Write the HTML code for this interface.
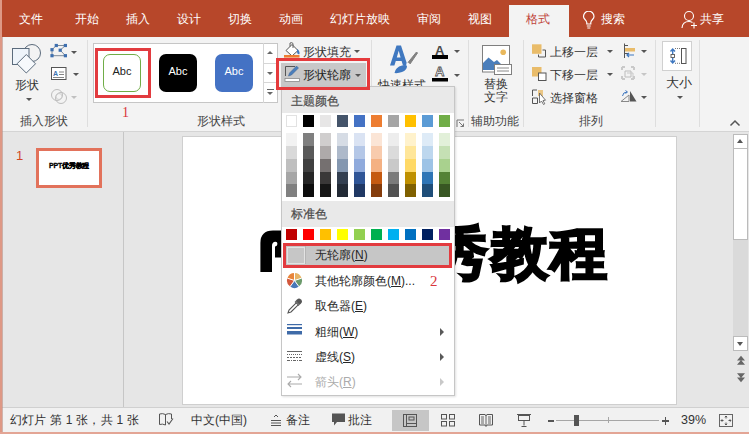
<!DOCTYPE html>
<html><head><meta charset="utf-8">
<style>
*{margin:0;padding:0;box-sizing:border-box}
html,body{width:749px;height:434px;overflow:hidden}
body{position:relative;background:#E6E6E6;font-family:"Liberation Sans",sans-serif;font-size:12px;color:#262626}
.a{position:absolute}
.t{position:absolute;white-space:nowrap;line-height:1}
#title{left:0;top:0;width:749px;height:37px;background:#B7472A}
.tab{position:absolute;top:13px;color:#fff;font-size:12px;line-height:13px;white-space:nowrap}
#ribbon{left:0;top:37px;width:749px;height:95px;background:#F3F3F3;border-bottom:1px solid #D4D4D4}
.sep{position:absolute;width:1px;background:#DEDEDE;top:40px;height:87px}
.grp{position:absolute;top:115px;font-size:12px;line-height:12px;color:#444;white-space:nowrap}
.dd{position:absolute;width:0;height:0;border-left:3px solid transparent;border-right:3px solid transparent;border-top:3px solid #555}
</style></head><body>
<div id="title" class="a"></div>
<div class="tab" style="left:19px">文件</div>
<div class="tab" style="left:75px">开始</div>
<div class="tab" style="left:126px">插入</div>
<div class="tab" style="left:177px">设计</div>
<div class="tab" style="left:228px">切换</div>
<div class="tab" style="left:279px">动画</div>
<div class="tab" style="left:330px">幻灯片放映</div>
<div class="tab" style="left:417px">审阅</div>
<div class="tab" style="left:468px">视图</div>
<div class="a" style="left:509px;top:5px;width:60px;height:33px;background:#F3F3F3"></div>
<div class="tab" style="left:526px;color:#C0443A">格式</div>
<div class="tab" style="left:601px">搜索</div>
<div class="tab" style="left:700px">共享</div>

<div id="ribbon" class="a"></div>
<div class="sep" style="left:87px"></div>
<div class="sep" style="left:371px"></div>
<div class="sep" style="left:468px"></div>
<div class="sep" style="left:523px"></div>
<div class="sep" style="left:655px"></div>
<div class="sep" style="left:699px"></div>
<div class="grp" style="left:20px">插入形状</div>
<div class="grp" style="left:197px">形状样式</div>
<div class="grp" style="left:471px">辅助功能</div>
<div class="grp" style="left:579px">排列</div>


<!-- group1 insert shapes -->
<svg class="a" style="left:10px;top:42px" width="34" height="34" viewBox="10 42 34 34">
<circle cx="32" cy="53" r="8.5" fill="#F3F3F3" stroke="#5B6B7C" stroke-width="1"/>
<rect x="12.5" y="48.5" width="16.5" height="16" fill="#EEF4FA" stroke="#5B6B7C" stroke-width="1"/>
<path d="M26.3 54.5 L35.5 63.8 L26.3 73 L17 63.8 Z" fill="#F6F9FC" stroke="#5B6B7C" stroke-width="1"/>
</svg>
<div class="t" style="left:15px;top:79px;font-size:12px;color:#333">形状</div>
<div class="dd" style="left:26px;top:98px"></div>
<svg class="a" style="left:48px;top:42px" width="22" height="17" viewBox="48 42 22 17">
<path d="M56.3 45.5 H65.4 L60.2 50.2 L65.4 55.7 H52 V49.7 Z" fill="none" stroke="#6F7F8F" stroke-width="0.9"/>
<rect x="54.7" y="43.9" width="3.2" height="3.2" fill="#3E6FAE"/>
<rect x="63.8" y="43.9" width="3.2" height="3.2" fill="#3E6FAE"/>
<rect x="50.4" y="48.1" width="3.2" height="3.2" fill="#3E6FAE"/>
<rect x="58.6" y="48.6" width="3.2" height="3.2" fill="#3E6FAE"/>
<rect x="50.4" y="54.1" width="3.2" height="3.2" fill="#3E6FAE"/>
<rect x="63.8" y="54.1" width="3.2" height="3.2" fill="#3E6FAE"/>
</svg>
<div class="dd" style="left:71px;top:51px"></div>
<svg class="a" style="left:50px;top:66px" width="18" height="15" viewBox="50 66 18 15">
<rect x="51.5" y="67.5" width="14.5" height="12" fill="#fff" stroke="#555" stroke-width="1"/>
<text x="53" y="76" font-size="7" font-family="Liberation Sans" fill="#3E72B0" font-weight="bold">A</text>
<path d="M59 72h5M59 74.5h5M53 77.5h11" stroke="#666" stroke-width="0.8"/>
</svg>
<div class="dd" style="left:73px;top:73px"></div>
<svg class="a" style="left:50px;top:88px" width="18" height="17" viewBox="50 88 18 17">
<circle cx="57" cy="95" r="5.5" fill="none" stroke="#BDBDBD" stroke-width="1"/>
<circle cx="61" cy="98" r="5.5" fill="none" stroke="#BDBDBD" stroke-width="1"/>
<circle cx="59" cy="96.5" r="3" fill="none" stroke="#C8C8C8" stroke-width="0.8"/>
</svg>
<div class="dd" style="left:71px;top:96px;border-top-color:#C0C0C0"></div>


<!-- group2 gallery -->
<div class="a" style="left:93px;top:43px;width:185px;height:60px;background:#fff;border:1px solid #C6C6C6"></div>
<div class="a" style="left:263px;top:43px;width:1px;height:60px;background:#D6D6D6"></div>
<div class="a" style="left:263px;top:63px;width:15px;height:1px;background:#D6D6D6"></div>
<div class="a" style="left:263px;top:82px;width:15px;height:1px;background:#D6D6D6"></div>
<div class="a" style="left:267px;top:51px;width:0;height:0;border-left:3.5px solid transparent;border-right:3.5px solid transparent;border-bottom:3.5px solid #666"></div>
<div class="dd" style="left:267px;top:72px;border-left-width:3.5px;border-right-width:3.5px;border-top:3.5px solid #666"></div>
<div class="a" style="left:267px;top:89px;width:7px;height:1px;background:#666"></div>
<div class="dd" style="left:267px;top:92px;border-left-width:3.5px;border-right-width:3.5px;border-top:3.5px solid #666"></div>
<div class="a" style="left:103px;top:54px;width:38px;height:38px;border:1px solid #70AD47;border-radius:7px;background:#fff"></div>
<div class="t" style="left:112.5px;top:66px;font-size:11px;color:#222">Abc</div>
<div class="a" style="left:159px;top:54px;width:38px;height:38px;border-radius:7px;background:#000"></div>
<div class="t" style="left:168.5px;top:66px;font-size:11px;color:#fff">Abc</div>
<div class="a" style="left:215px;top:54px;width:38px;height:38px;border-radius:7px;background:#4472C4"></div>
<div class="t" style="left:224.5px;top:66px;font-size:11px;color:#fff">Abc</div>
<div class="a" style="left:95px;top:48px;width:56px;height:50px;border:3px solid #E23B3F"></div>
<div class="t" style="left:122px;top:106px;font-size:14px;color:#D9363B;font-family:'Liberation Serif',serif">1</div>

<!-- fill/outline -->
<svg class="a" style="left:284px;top:42px" width="17" height="16" viewBox="284 42 17 16">
<path d="M286 50.5 L292 44.5 L298 50.5 L292 56 Z" fill="#fff" stroke="#555" stroke-width="1"/>
<path d="M290 46.5 L290 43 Q292 42 293 43.5 L293 48" fill="none" stroke="#555" stroke-width="0.9"/>
<path d="M297 49 Q300 51 299.5 54 Q297.5 55 297 52 Z" fill="#3F78C0"/>
<rect x="284" y="55" width="15.5" height="2.6" fill="#ED7D31"/>
</svg>
<div class="t" style="left:303px;top:46px;font-size:12px;color:#333">形状填充</div>
<div class="dd" style="left:354px;top:50px"></div>
<div class="a" style="left:276px;top:57.5px;width:94px;height:32px;border:3px solid #E53A3C;z-index:5"></div>
<div class="a" style="left:280.5px;top:62.5px;width:85px;height:23px;background:#C8C8C8"></div>
<svg class="a" style="left:284px;top:64px" width="17" height="18" viewBox="284 64 17 18">
<path d="M285.5 76 L285.5 66.5 L295 66.5" fill="none" stroke="#555" stroke-width="1"/>
<path d="M288.5 76 L289.5 73 L296.5 66 L298.5 68 L291.5 75 Z" fill="#4A7EBB" stroke="#3A5F8F" stroke-width="0.5"/>
<rect x="285" y="78.5" width="14.5" height="3" fill="#fff" stroke="#8A8A8A" stroke-width="0.8"/>
</svg>
<div class="t" style="left:303px;top:69px;font-size:12px;color:#222">形状轮廓</div>
<div class="dd" style="left:355px;top:74px"></div>

<!-- wordart -->
<svg class="a" style="left:385px;top:43px" width="34" height="33" viewBox="385 43 34 33">
<path d="M390 65.5 L396.5 45.5 L401 45.5 L407.5 65.5 L403 65.5 L401.6 61 L395.8 61 L394.4 65.5 Z M396.8 57.5 L400.6 57.5 L398.7 50.8 Z" fill="#3F78C0" fill-rule="evenodd"/>
<path d="M408 62.5 L416.5 52 L417.5 53 L410 64" fill="#808080" stroke="#808080" stroke-width="1"/>
<path d="M406.5 63 L408.5 65 L406 67" fill="#fff"/>
<path d="M394.5 73 Q395.5 67 402 65.5 Q406 64.5 407 66 Q407 70 402 72 Q398 73.5 394.5 73 Z" fill="#3F78C0"/>
</svg>
<div class="t" style="left:378px;top:79px;font-size:12px;color:#333">快速样式</div>
<div class="t" style="left:435px;top:44px;font-size:13px;color:#4A4A4A;font-weight:bold">A</div>
<div class="a" style="left:432px;top:55px;width:16px;height:3.5px;background:#000"></div>
<div class="dd" style="left:454px;top:50px"></div>
<svg class="a" style="left:432px;top:64px" width="17" height="19" viewBox="432 64 17 19">
<text x="435" y="76" font-size="13" font-family="Liberation Sans" font-weight="bold" fill="#fff" stroke="#555" stroke-width="0.8">A</text>
<rect x="432" y="78" width="16" height="3.5" fill="#000"/>
</svg>
<div class="dd" style="left:454px;top:74px"></div>
<svg class="a" style="left:456px;top:119px" width="9" height="9" viewBox="0 0 9 9">
<path d="M1 8 L1 1 L8 1" fill="none" stroke="#777" stroke-width="1"/>
<path d="M3 3 L7.5 7.5 M4.5 7.5 L7.5 7.5 L7.5 4.5" fill="none" stroke="#777" stroke-width="1"/>
</svg>


<!-- alt text -->
<svg class="a" style="left:480px;top:43px" width="34" height="34" viewBox="480 43 34 34">
<rect x="482.5" y="45.5" width="27" height="26.5" fill="#fff" stroke="#7F7F7F" stroke-width="1"/>
<circle cx="503.2" cy="52.2" r="2.8" fill="#E9B85C"/>
<path d="M483 70 L483 63 L488.5 57.5 L494 62 L497 60 L502 65 L502 70 Z" fill="#4A7EBB"/>
<rect x="494.5" y="64.5" width="17" height="10" fill="#fff" stroke="#7F7F7F" stroke-width="1"/>
<path d="M497 68h12M497 71h12" stroke="#8A8A8A" stroke-width="1"/>
</svg>
<div class="t" style="left:484px;top:78px;font-size:12px;color:#333">替换</div>
<div class="t" style="left:484px;top:91px;font-size:12px;color:#333">文字</div>

<!-- arrange -->
<svg class="a" style="left:530px;top:42px" width="18" height="64" viewBox="530 42 18 64">
<rect x="532" y="44.3" width="9.5" height="9.5" fill="#E9BC6A"/>
<path d="M542.5 50 L545.5 50 L545.5 57 L538.5 57 L538.5 54.5" fill="none" stroke="#555" stroke-width="1"/>
<rect x="532" y="67" width="9.5" height="9.5" fill="#E9BC6A"/>
<rect x="538.5" y="73" width="7.5" height="7.5" fill="#fff" stroke="#555" stroke-width="1"/>
<path d="M532.5 96 L532.5 90 L537 90 M532.5 98 L537.5 98 L537.5 103.5 L532.5 103.5 Z" fill="none" stroke="#555" stroke-width="1"/>
<rect x="538" y="90" width="5" height="6" fill="#E9BC6A" opacity="0.8"/>
<path d="M539.5 93 L539.5 103 L541.5 101 L543.5 104.5 L544.8 103.8 L543 100.5 L545.5 100.2 Z" fill="#fff" stroke="#555" stroke-width="0.8"/>
</svg>
<div class="t" style="left:550px;top:46px;font-size:12px;color:#333">上移一层</div>
<div class="t" style="left:550px;top:69px;font-size:12px;color:#333">下移一层</div>
<div class="t" style="left:550px;top:92px;font-size:12px;color:#333">选择窗格</div>
<div class="dd" style="left:607px;top:50px"></div>
<div class="dd" style="left:607px;top:73px"></div>
<svg class="a" style="left:619px;top:42px" width="20" height="62" viewBox="619 42 20 62">
<path d="M624.5 43.5 V58" stroke="#555" stroke-width="1"/>
<rect x="625" y="48" width="10" height="3.5" fill="#E9BC6A"/>
<path d="M625 45.5 h3 M625 53.5h3" stroke="#555" stroke-width="1"/>
<path d="M634 55 H627 M629 53 L627 55 L629 57" fill="none" stroke="#3F78C0" stroke-width="1.2"/>
<path d="M622 67 h3 M631 67 h3 M622 79 h3 M631 79 h3 M622 67 v3 M622 76 v3 M634 67 v3 M634 76 v3" stroke="#C9C9C9" stroke-width="2"/>
<path d="M625 71 h6 v6 h-6 z" fill="none" stroke="#BDBDBD" stroke-width="1"/>
<path d="M627 73 h6 v5" fill="none" stroke="#C9C9C9" stroke-width="1"/>
<path d="M621 101.5 L629 95 L629 101.5 Z" fill="none" stroke="#888" stroke-width="1"/>
<path d="M630 91 L636.5 101.5 L630 101.5 Z" fill="#555"/>
<path d="M622.5 96 Q623 92 627 92 M625.5 90.5 L627.5 92 L625.5 93.5" fill="none" stroke="#3F78C0" stroke-width="1"/>
</svg>
<div class="dd" style="left:641px;top:50px"></div>
<div class="dd" style="left:641px;top:73px;border-top-color:#C6C6C6"></div>
<div class="dd" style="left:641px;top:96px"></div>

<!-- size -->
<div class="a" style="left:662px;top:41px;width:30px;height:30px;background:#fff;border:1px solid #D0D0D0"></div>
<svg class="a" style="left:663px;top:42px" width="28" height="28" viewBox="663 42 28 28">
<path d="M672.7 49 V54 M670.5 51.5 L672.7 49 L675 51.5 M672.7 58 V63 M670.5 60.5 L672.7 63 L675 60.5" fill="none" stroke="#3F78C0" stroke-width="1.4"/>
<rect x="671" y="54.5" width="3.5" height="3" fill="none" stroke="#555" stroke-width="0.9"/>
<path d="M675 48.5 h6 M675 63.3 h6" stroke="#555" stroke-width="0.8" stroke-dasharray="1 1"/>
<rect x="681.5" y="48.5" width="4.5" height="15" fill="#fff" stroke="#555" stroke-width="1"/>
</svg>
<div class="t" style="left:666px;top:77px;font-size:12.5px;color:#333">大小</div>
<div class="dd" style="left:677px;top:96px"></div>
<svg class="a" style="left:729px;top:119px" width="12" height="8" viewBox="0 0 12 8">
<path d="M1.5 6.5 L6 2 L10.5 6.5" fill="none" stroke="#555" stroke-width="1.5"/>
</svg>

<!-- tab icons -->
<svg class="a" style="left:581px;top:11px" width="16" height="19" viewBox="581 11 16 19">
<path d="M586.8 24 L586.8 22.5 Q586.5 21 585 19.5 Q583.5 18 583.5 16.5 A5.2 5.2 0 0 1 594 16.5 Q594 18 592.5 19.5 Q591 21 590.8 22.5 L590.8 24 Z" fill="none" stroke="#fff" stroke-width="1.2"/>
<path d="M586.8 26 h4 M587.3 28 h3" stroke="#fff" stroke-width="1.2"/>
</svg>
<svg class="a" style="left:680px;top:10px" width="19" height="20" viewBox="680 10 19 20">
<circle cx="689" cy="16" r="4.5" fill="none" stroke="#fff" stroke-width="1.1"/>
<path d="M682 28 Q682.5 21.5 689 21.5 Q691 21.5 692.5 22.5" fill="none" stroke="#fff" stroke-width="1.1"/>
<path d="M694 22.5 v6 M691 25.5 h6" stroke="#fff" stroke-width="1.1"/>
</svg>

<!-- workspace -->
<div class="a" style="left:123px;top:132px;width:1px;height:275px;background:#C6C6C6"></div>
<div class="a" style="left:182px;top:136px;width:495px;height:269px;background:#fff;border:1px solid #CFCFCF"></div>

<!-- thumb -->
<div class="t" style="left:16px;top:149px;font-size:13px;color:#D24726">1</div>
<div class="a" style="left:36px;top:148px;width:66px;height:40px;background:#fff;border:3px solid #E2725B"></div>
<div class="t" style="left:49px;top:162px;font-size:7px;font-weight:bold;color:#000;letter-spacing:-0.2px;-webkit-text-stroke:0.3px #000">PPT优秀教程</div>
<!-- big slide text -->
<svg class="a" style="left:258px;top:228px" width="30" height="46" viewBox="258 228 30 46"><path d="M260.4 272 V243 Q260.4 230.4 273 230.4 H287 V257.4 H275 V246.5 C277.5 246.5 278.5 241.8 275.5 241.8 C273 241.8 272 243.5 272 246 V272 Z" fill="#000"/></svg>
<div class="t" id="bigC" style="left:431px;top:225px;font-size:57px;font-weight:bold;color:#000;-webkit-text-stroke:2.5px #000;letter-spacing:2.5px">秀教程</div>
<!-- scrollbar -->
<div class="a" style="left:733px;top:148px;width:15px;height:188px;background:#DADADA"></div>
<div class="a" style="left:733px;top:134px;width:15px;height:15px;background:#fff;border:1px solid #BBBBBB"></div>
<div class="a" style="left:737px;top:139px;width:0;height:0;border-left:3.5px solid transparent;border-right:3.5px solid transparent;border-bottom:4px solid #555"></div>
<div class="a" style="left:733px;top:148px;width:15px;height:92px;background:#fff;border:1px solid #BBBBBB"></div>
<div class="a" style="left:733px;top:336px;width:15px;height:15px;background:#fff;border:1px solid #BBBBBB"></div>
<div class="a" style="left:737px;top:342px;width:0;height:0;border-left:3.5px solid transparent;border-right:3.5px solid transparent;border-top:4px solid #555"></div>
<svg class="a" style="left:735px;top:353px" width="12" height="32" viewBox="735 353 12 32">
<path d="M737 360.5 L741 355.8 L745 360.5 Z M737 364.8 L741 360.1 L745 364.8 Z" fill="#666"/>
<path d="M737 373.3 L741 378 L745 373.3 Z M737 377.6 L741 382.3 L745 377.6 Z" fill="#666"/>
</svg>

<!-- menu -->
<div class="a" style="left:281px;top:86px;width:174px;height:310px;background:#fff;border:1px solid #C6C6C6;box-shadow:1px 1px 2px rgba(0,0,0,0.12)"></div>
<div class="a" style="left:282px;top:87px;width:172px;height:26px;background:#E9E9E9"></div>
<div class="t" style="left:291px;top:95px;font-size:12px;color:#4A4A4A;-webkit-text-stroke:0.2px #4A4A4A">主题颜色</div>
<div class="a" style="left:285.7px;top:115.4px;width:11.7px;height:12px;background:#FFFFFF;border:1px solid #E2E2E2;"></div>
<div class="a" style="left:302.7px;top:115.4px;width:11.7px;height:12px;background:#000000;"></div>
<div class="a" style="left:319.7px;top:115.4px;width:11.7px;height:12px;background:#E7E6E6;"></div>
<div class="a" style="left:336.7px;top:115.4px;width:11.7px;height:12px;background:#44546A;"></div>
<div class="a" style="left:353.7px;top:115.4px;width:11.7px;height:12px;background:#4472C4;"></div>
<div class="a" style="left:370.7px;top:115.4px;width:11.7px;height:12px;background:#ED7D31;"></div>
<div class="a" style="left:387.7px;top:115.4px;width:11.7px;height:12px;background:#A5A5A5;"></div>
<div class="a" style="left:404.7px;top:115.4px;width:11.7px;height:12px;background:#FFC000;"></div>
<div class="a" style="left:421.7px;top:115.4px;width:11.7px;height:12px;background:#5B9BD5;"></div>
<div class="a" style="left:438.7px;top:115.4px;width:11.7px;height:12px;background:#70AD47;"></div>
<div class="a" style="left:285.7px;top:133.4px;width:11.7px;height:12.8px;background:#F2F2F2"></div>
<div class="a" style="left:285.7px;top:146.1px;width:11.7px;height:12.8px;background:#D9D9D9"></div>
<div class="a" style="left:285.7px;top:158.8px;width:11.7px;height:12.8px;background:#BFBFBF"></div>
<div class="a" style="left:285.7px;top:171.5px;width:11.7px;height:12.8px;background:#A6A6A6"></div>
<div class="a" style="left:285.7px;top:184.2px;width:11.7px;height:12.8px;background:#808080"></div>
<div class="a" style="left:302.7px;top:133.4px;width:11.7px;height:12.8px;background:#7F7F7F"></div>
<div class="a" style="left:302.7px;top:146.1px;width:11.7px;height:12.8px;background:#595959"></div>
<div class="a" style="left:302.7px;top:158.8px;width:11.7px;height:12.8px;background:#404040"></div>
<div class="a" style="left:302.7px;top:171.5px;width:11.7px;height:12.8px;background:#262626"></div>
<div class="a" style="left:302.7px;top:184.2px;width:11.7px;height:12.8px;background:#0D0D0D"></div>
<div class="a" style="left:319.7px;top:133.4px;width:11.7px;height:12.8px;background:#D0CECE"></div>
<div class="a" style="left:319.7px;top:146.1px;width:11.7px;height:12.8px;background:#AEAAAA"></div>
<div class="a" style="left:319.7px;top:158.8px;width:11.7px;height:12.8px;background:#757070"></div>
<div class="a" style="left:319.7px;top:171.5px;width:11.7px;height:12.8px;background:#3A3838"></div>
<div class="a" style="left:319.7px;top:184.2px;width:11.7px;height:12.8px;background:#161616"></div>
<div class="a" style="left:336.7px;top:133.4px;width:11.7px;height:12.8px;background:#D6DCE5"></div>
<div class="a" style="left:336.7px;top:146.1px;width:11.7px;height:12.8px;background:#ADB9CA"></div>
<div class="a" style="left:336.7px;top:158.8px;width:11.7px;height:12.8px;background:#8497B0"></div>
<div class="a" style="left:336.7px;top:171.5px;width:11.7px;height:12.8px;background:#333F50"></div>
<div class="a" style="left:336.7px;top:184.2px;width:11.7px;height:12.8px;background:#222A35"></div>
<div class="a" style="left:353.7px;top:133.4px;width:11.7px;height:12.8px;background:#DAE3F3"></div>
<div class="a" style="left:353.7px;top:146.1px;width:11.7px;height:12.8px;background:#B4C7E7"></div>
<div class="a" style="left:353.7px;top:158.8px;width:11.7px;height:12.8px;background:#8FAADC"></div>
<div class="a" style="left:353.7px;top:171.5px;width:11.7px;height:12.8px;background:#2F5597"></div>
<div class="a" style="left:353.7px;top:184.2px;width:11.7px;height:12.8px;background:#203864"></div>
<div class="a" style="left:370.7px;top:133.4px;width:11.7px;height:12.8px;background:#FBE5D6"></div>
<div class="a" style="left:370.7px;top:146.1px;width:11.7px;height:12.8px;background:#F8CBAD"></div>
<div class="a" style="left:370.7px;top:158.8px;width:11.7px;height:12.8px;background:#F4B183"></div>
<div class="a" style="left:370.7px;top:171.5px;width:11.7px;height:12.8px;background:#C55A11"></div>
<div class="a" style="left:370.7px;top:184.2px;width:11.7px;height:12.8px;background:#843C0C"></div>
<div class="a" style="left:387.7px;top:133.4px;width:11.7px;height:12.8px;background:#EDEDED"></div>
<div class="a" style="left:387.7px;top:146.1px;width:11.7px;height:12.8px;background:#DBDBDB"></div>
<div class="a" style="left:387.7px;top:158.8px;width:11.7px;height:12.8px;background:#C9C9C9"></div>
<div class="a" style="left:387.7px;top:171.5px;width:11.7px;height:12.8px;background:#7B7B7B"></div>
<div class="a" style="left:387.7px;top:184.2px;width:11.7px;height:12.8px;background:#525252"></div>
<div class="a" style="left:404.7px;top:133.4px;width:11.7px;height:12.8px;background:#FFF2CC"></div>
<div class="a" style="left:404.7px;top:146.1px;width:11.7px;height:12.8px;background:#FFE699"></div>
<div class="a" style="left:404.7px;top:158.8px;width:11.7px;height:12.8px;background:#FFD966"></div>
<div class="a" style="left:404.7px;top:171.5px;width:11.7px;height:12.8px;background:#BF9000"></div>
<div class="a" style="left:404.7px;top:184.2px;width:11.7px;height:12.8px;background:#7F6000"></div>
<div class="a" style="left:421.7px;top:133.4px;width:11.7px;height:12.8px;background:#DEEBF7"></div>
<div class="a" style="left:421.7px;top:146.1px;width:11.7px;height:12.8px;background:#BDD7EE"></div>
<div class="a" style="left:421.7px;top:158.8px;width:11.7px;height:12.8px;background:#9DC3E6"></div>
<div class="a" style="left:421.7px;top:171.5px;width:11.7px;height:12.8px;background:#2E75B6"></div>
<div class="a" style="left:421.7px;top:184.2px;width:11.7px;height:12.8px;background:#1F4E79"></div>
<div class="a" style="left:438.7px;top:133.4px;width:11.7px;height:12.8px;background:#E2F0D9"></div>
<div class="a" style="left:438.7px;top:146.1px;width:11.7px;height:12.8px;background:#C5E0B4"></div>
<div class="a" style="left:438.7px;top:158.8px;width:11.7px;height:12.8px;background:#A9D18E"></div>
<div class="a" style="left:438.7px;top:171.5px;width:11.7px;height:12.8px;background:#548235"></div>
<div class="a" style="left:438.7px;top:184.2px;width:11.7px;height:12.8px;background:#385723"></div>
<div class="a" style="left:282px;top:200.5px;width:172px;height:26px;background:#E9E9E9"></div>
<div class="t" style="left:291px;top:208px;font-size:12px;color:#4A4A4A;-webkit-text-stroke:0.2px #4A4A4A">标准色</div>
<div class="a" style="left:285.7px;top:229.3px;width:11.7px;height:11px;background:#C00000"></div>
<div class="a" style="left:302.7px;top:229.3px;width:11.7px;height:11px;background:#FF0000"></div>
<div class="a" style="left:319.7px;top:229.3px;width:11.7px;height:11px;background:#FFC000"></div>
<div class="a" style="left:336.7px;top:229.3px;width:11.7px;height:11px;background:#FFFF00"></div>
<div class="a" style="left:353.7px;top:229.3px;width:11.7px;height:11px;background:#92D050"></div>
<div class="a" style="left:370.7px;top:229.3px;width:11.7px;height:11px;background:#00B050"></div>
<div class="a" style="left:387.7px;top:229.3px;width:11.7px;height:11px;background:#00B0F0"></div>
<div class="a" style="left:404.7px;top:229.3px;width:11.7px;height:11px;background:#0070C0"></div>
<div class="a" style="left:421.7px;top:229.3px;width:11.7px;height:11px;background:#002060"></div>
<div class="a" style="left:438.7px;top:229.3px;width:11.7px;height:11px;background:#7030A0"></div>
<div class="a" style="left:283px;top:243px;width:169px;height:24.5px;background:#C6C6C6;border:3px solid #E23B3F"></div>
<div class="a" style="left:287px;top:247px;width:17.5px;height:16.5px;border:1px solid #E3E3E3"></div>
<div class="a" style="left:305px;top:246px;width:1px;height:18px;background:#B5B5B5"></div>
<div class="t" style="left:315px;top:249px;font-size:12px;color:#262626">无轮廓(<u>N</u>)</div>
<svg class="a" style="left:286px;top:272px" width="17" height="17" viewBox="0 0 17 17">
<g transform="translate(8.5,8.5)">
<path d="M0 0 L0 -7.5 A7.5 7.5 0 0 1 7.1 -2.3 Z" fill="#E7B467"/>
<path d="M0 0 L7.1 -2.3 A7.5 7.5 0 0 1 4.4 6.1 Z" fill="#6B9A6B"/>
<path d="M0 0 L4.4 6.1 A7.5 7.5 0 0 1 -4.4 6.1 Z" fill="#4878B8"/>
<path d="M0 0 L-4.4 6.1 A7.5 7.5 0 0 1 -7.1 -2.3 Z" fill="#D2573C"/>
<path d="M0 0 L-7.1 -2.3 A7.5 7.5 0 0 1 0 -7.5 Z" fill="#E8853A"/>
<path d="M0 0 L0 -7.5 M0 0 L7.1 -2.3 M0 0 L4.4 6.1 M0 0 L-4.4 6.1 M0 0 L-7.1 -2.3" stroke="#fff" stroke-width="1"/>
</g></svg>
<div class="t" style="left:315px;top:275px;font-size:12px;color:#262626">其他轮廓颜色(<u>M</u>)...</div>
<div class="t" style="left:430px;top:273.5px;font-size:15px;color:#D9363B;font-family:'Liberation Serif',serif">2</div>
<svg class="a" style="left:286px;top:297px" width="17" height="18" viewBox="0 0 17 18">
<path d="M11 2.5 Q13 0.5 15 2.5 Q17 4.5 15 6.5 L13.5 8 L9.5 4 Z" fill="#555"/>
<path d="M9 4.5 L13 8.5 M10.2 5.8 L3 13 L2 16 L5 15 L12.2 7.8" fill="none" stroke="#555" stroke-width="1.1"/>
</svg>
<div class="t" style="left:315px;top:300px;font-size:12px;color:#262626">取色器(<u>E</u>)</div>
<svg class="a" style="left:286px;top:323px" width="17" height="14" viewBox="0 0 17 14">
<rect x="1" y="1" width="15" height="1.2" fill="#3F6BA8"/>
<rect x="1" y="4" width="15" height="2" fill="#3F6BA8"/>
<rect x="1" y="8" width="15" height="3.5" fill="#3F6BA8"/>
</svg>
<div class="t" style="left:315px;top:326px;font-size:12px;color:#262626">粗细(<u>W</u>)</div>
<div class="a" style="left:440px;top:327.5px;width:0;height:0;border-top:4px solid transparent;border-bottom:4px solid transparent;border-left:4.5px solid #595959"></div>
<svg class="a" style="left:286px;top:350px" width="17" height="12" viewBox="0 0 17 12">
<rect x="1" y="1" width="15" height="1" fill="#666"/>
<path d="M1 4.5 H16" stroke="#666" stroke-width="1" stroke-dasharray="1 1"/>
<path d="M1 7.5 H16" stroke="#666" stroke-width="1" stroke-dasharray="2 1"/>
<path d="M1 10.5 H16" stroke="#666" stroke-width="1" stroke-dasharray="3 1 1 1"/>
</svg>
<div class="t" style="left:315px;top:351px;font-size:12px;color:#262626">虚线(<u>S</u>)</div>
<div class="a" style="left:440px;top:352.5px;width:0;height:0;border-top:4px solid transparent;border-bottom:4px solid transparent;border-left:4.5px solid #595959"></div>
<svg class="a" style="left:286px;top:372px" width="17" height="17" viewBox="0 0 17 17">
<path d="M1 5 H15 M12 2 L15 5 L12 8 M16 12 H2 M5 9 L2 12 L5 15" fill="none" stroke="#AAAAAA" stroke-width="1.1"/>
</svg>
<div class="t" style="left:315px;top:376px;font-size:12px;color:#ABABAB">箭头(<u>R</u>)</div>
<div class="a" style="left:440px;top:377.5px;width:0;height:0;border-top:4px solid transparent;border-bottom:4px solid transparent;border-left:4.5px solid #C8C8C8"></div>

<!-- status -->
<div class="a" style="left:0;top:407px;width:749px;height:27px;background:#F1F1F1;border-top:1px solid #D0D0D0"></div>

<!-- statusbar content -->
<div class="t" style="left:10px;top:414px;font-size:12px;color:#333;letter-spacing:0.2px">幻灯片 第 1 张，共 1 张</div>
<svg class="a" style="left:158px;top:412px" width="16" height="15" viewBox="0 0 16 15">
<path d="M1.5 2 Q4.5 1 7.5 2.5 L7.5 13 Q4.5 11.5 1.5 12.5 Z M7.5 2.5 Q10.5 1 13.5 2 L13.5 7" fill="none" stroke="#555" stroke-width="1"/>
<path d="M9 9.5 L11 12 L15 6.5" fill="none" stroke="#555" stroke-width="1.1"/>
</svg>
<div class="t" style="left:191px;top:414px;font-size:12px;color:#333">中文(中国)</div>
<svg class="a" style="left:270px;top:413px" width="12" height="14" viewBox="0 0 12 14">
<path d="M4 4 L6 2 L8 4" fill="none" stroke="#555" stroke-width="1"/>
<path d="M1 7.5 H11 M1 10 H11 M1 12.5 H11" stroke="#555" stroke-width="1"/>
</svg>
<div class="t" style="left:286px;top:414px;font-size:12px;color:#333">备注</div>
<svg class="a" style="left:331px;top:412px" width="15" height="15" viewBox="0 0 15 15">
<path d="M1 1.5 H14 V10 H6 L3 13.5 L3 10 H1 Z" fill="#555"/>
</svg>
<div class="t" style="left:348px;top:414px;font-size:12px;color:#333">批注</div>
<div class="a" style="left:392px;top:410px;width:37px;height:21px;background:#C6C6C6"></div>
<svg class="a" style="left:402px;top:413px" width="16" height="15" viewBox="0 0 16 15">
<rect x="1.5" y="1.5" width="13" height="12" fill="none" stroke="#555" stroke-width="1"/>
<path d="M4.5 1.5 V13.5" stroke="#555" stroke-width="1"/>
<rect x="7" y="4" width="5" height="3" fill="none" stroke="#555" stroke-width="1"/>
<path d="M4.5 10.5 H14.5" stroke="#555" stroke-width="1"/>
</svg>
<svg class="a" style="left:440px;top:413px" width="16" height="15" viewBox="0 0 16 15">
<rect x="1.5" y="1.5" width="5" height="4.5" fill="none" stroke="#555" stroke-width="1"/>
<rect x="9.5" y="1.5" width="5" height="4.5" fill="none" stroke="#555" stroke-width="1"/>
<rect x="1.5" y="8.5" width="5" height="4.5" fill="none" stroke="#555" stroke-width="1"/>
<rect x="9.5" y="8.5" width="5" height="4.5" fill="none" stroke="#555" stroke-width="1"/>
</svg>
<svg class="a" style="left:478px;top:413px" width="16" height="15" viewBox="0 0 16 15">
<path d="M1.5 1.5 H7 Q8 2 8 3 Q8 2 9 1.5 H14.5 V12 H9 L8 13.5 L7 12 H1.5 Z" fill="none" stroke="#555" stroke-width="1"/>
<path d="M8 3 V12 M3 4 H6 M3 6 H6 M3 8 H6 M3 10 H6 M10 4 H13 M10 6 H13 M10 8 H13 M10 10 H13" stroke="#555" stroke-width="0.9"/>
</svg>
<svg class="a" style="left:516px;top:413px" width="16" height="15" viewBox="0 0 16 15">
<path d="M1 1.5 H15" stroke="#555" stroke-width="1"/>
<rect x="2.5" y="2.5" width="11" height="5" fill="none" stroke="#555" stroke-width="1"/>
<path d="M8 7.5 V12.5 M5.5 13.5 H10.5" stroke="#555" stroke-width="1"/>
</svg>
<div class="a" style="left:548px;top:420px;width:6px;height:1.5px;background:#555"></div>
<div class="a" style="left:556px;top:420px;width:103px;height:1px;background:#A6A6A6"></div>
<div class="a" style="left:608px;top:417px;width:1px;height:6px;background:#A6A6A6"></div>
<div class="a" style="left:574px;top:415px;width:5px;height:11px;background:#555"></div>
<div class="a" style="left:661.5px;top:420px;width:7.5px;height:1.5px;background:#555"></div>
<div class="a" style="left:664.5px;top:417px;width:1.5px;height:7.5px;background:#555"></div>
<div class="t" style="left:681px;top:414px;font-size:12.5px;color:#333">39%</div>
<svg class="a" style="left:719px;top:414px" width="14" height="13" viewBox="0 0 14 13">
<rect x="0.5" y="0.5" width="13" height="12" fill="none" stroke="#666" stroke-width="1"/>
<path d="M7 2 V4.5 M5.8 3.2 L7 2 L8.2 3.2 M7 11 V8.5 M5.8 9.8 L7 11 L8.2 9.8 M2 6.5 H4.5 M3.2 5.3 L2 6.5 L3.2 7.7 M12 6.5 H9.5 M10.8 5.3 L12 6.5 L10.8 7.7" fill="none" stroke="#555" stroke-width="1"/>
</svg>

<div class="a" style="left:0;top:0;width:2px;height:434px;background:#DE9885"></div><div class="a" style="left:1.5px;top:37px;width:1px;height:397px;background:#B98A7E;opacity:0.6"></div>
<div class="a" style="left:0;top:432px;width:749px;height:2px;background:#E3A595"></div>
</body></html>
